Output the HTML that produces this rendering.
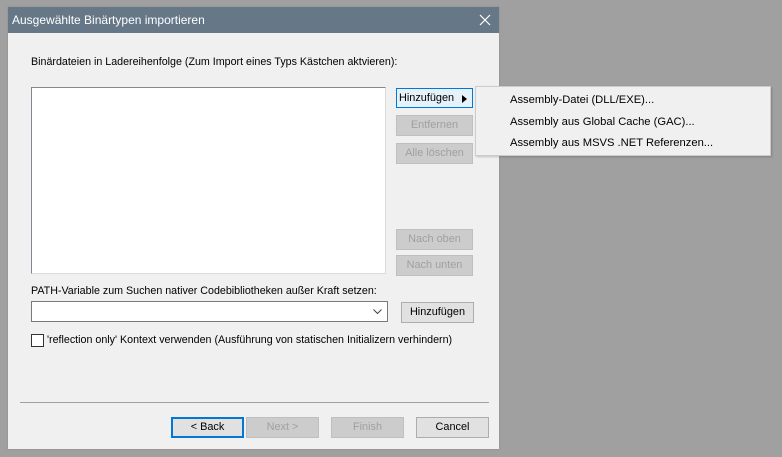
<!DOCTYPE html>
<html><head><meta charset="utf-8"><style>
body{margin:0;width:782px;height:457px;background:#a0a0a0;position:relative;overflow:hidden;font-family:"Liberation Sans",sans-serif;font-size:10.7px;color:#000}
.a{position:absolute}
.btn{position:absolute;box-sizing:border-box;border:1px solid #adadad;background:#e1e1e1;text-align:center;line-height:19px;font-size:10.9px}
.dis{color:#a0a0a0;border-color:#bfbfbf;background:#cccccc}
</style></head><body>
<div class="a" style="left:8px;top:7px;width:491px;height:442px;background:#f0f0f0;box-shadow:0 0 2px #888"></div>
<div class="a" style="left:8px;top:7px;width:491px;height:26px;background:#667788"></div>
<div class="a" style="left:12px;top:13px;color:#fff;font-size:12px">Ausgewählte Binärtypen importieren</div>
<svg class="a" style="left:479px;top:14px" width="12" height="12"><path d="M1 1L11 11M11 1L1 11" stroke="#fff" stroke-width="1.2"/></svg>
<div class="a" style="left:31px;top:56px">Binärdateien in Ladereihenfolge (Zum Import eines Typs Kästchen aktvieren):</div>
<div class="a" style="left:31px;top:87px;width:355px;height:187px;box-sizing:border-box;background:#fff;border:1px solid #828790;border-right-color:#dcdcdc;border-bottom-color:#dcdcdc"></div>
<div class="btn" style="left:396px;top:88px;width:77px;height:20px;border:1px solid #0078d7;background:#e5f1fb;text-align:left;padding-left:2px;line-height:18px">Hinzufügen<svg class="a" style="left:65px;top:6px" width="5" height="8"><path d="M0 0L5 4L0 8Z" fill="#000"/></svg></div>
<div class="btn dis" style="left:396px;top:115px;width:77px;height:21px">Entfernen</div>
<div class="btn dis" style="left:396px;top:143px;width:77px;height:21px">Alle löschen</div>
<div class="btn dis" style="left:396px;top:229px;width:77px;height:21px">Nach oben</div>
<div class="btn dis" style="left:396px;top:255px;width:77px;height:21px">Nach unten</div>
<div class="a" style="left:31px;top:285px">PATH-Variable zum Suchen nativer Codebibliotheken außer Kraft setzen:</div>
<div class="a" style="left:31px;top:301px;width:357px;height:21px;box-sizing:border-box;background:#fff;border:1px solid #7a7a7a"></div>
<svg class="a" style="left:373px;top:309px" width="9" height="6"><path d="M0.5 0.5L4.5 4.5L8.5 0.5" stroke="#444" fill="none"/></svg>
<div class="btn" style="left:401px;top:302px;width:73px;height:21px">Hinzufügen</div>
<div class="a" style="left:31px;top:334px;width:13px;height:13px;box-sizing:border-box;border:1px solid #333;background:#fff"></div>
<div class="a" style="left:47px;top:334px">'reflection only' Kontext verwenden (Ausführung von statischen Initializern verhindern)</div>
<div class="a" style="left:20px;top:402px;width:469px;height:1px;background:#a0a0a0"></div>
<div class="btn" style="left:171px;top:417px;width:73px;height:21px;border:2px solid #0078d7;line-height:17px">&lt; Back</div>
<div class="btn dis" style="left:246px;top:417px;width:73px;height:21px">Next &gt;</div>
<div class="btn dis" style="left:331px;top:417px;width:73px;height:21px">Finish</div>
<div class="btn" style="left:416px;top:417px;width:73px;height:21px">Cancel</div>
<div class="a" style="left:475px;top:86px;width:296px;height:70px;box-sizing:border-box;background:#f0f0f0;border:1px solid #ccc;box-shadow:1px 1px 2px rgba(0,0,0,.2)"></div>
<div class="a" style="left:510px;top:94px;font-size:11.2px">Assembly-Datei (DLL/EXE)...</div>
<div class="a" style="left:510px;top:116px;font-size:11.2px">Assembly aus Global Cache (GAC)...</div>
<div class="a" style="left:510px;top:137px;font-size:11.2px">Assembly aus MSVS .NET Referenzen...</div>
</body></html>
